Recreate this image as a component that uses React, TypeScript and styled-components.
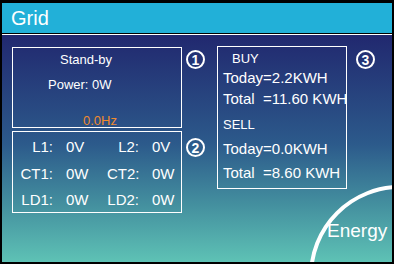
import styled, { createGlobalStyle } from "styled-components";

const GlobalStyle = createGlobalStyle`
  * {
    box-sizing: border-box;
  }
  body {
    margin: 0;
    background: #fff;
    font-family: "Liberation Sans", Arial, sans-serif;
  }
`;

const Screen = styled.div`
  position: relative;
  width: 394px;
  height: 264px;
  border: 2px solid #000;
  border-top-width: 3px;
  overflow: hidden;
  display: flex;
  flex-direction: column;
`;

const Header = styled.header`
  height: 31px;
  background: #22b0d8;
  border-bottom: 1px solid #000;
  color: #fff;
  font-size: 20px;
  line-height: 30px;
  padding-left: 9px;
`;

const Body = styled.main`
  flex: 1;
  border-top: 1px solid #fff;
  background: linear-gradient(180deg, #21286f 0%, #2c5a8b 48%, #44909f 75%, #5ec2b5 100%);
  padding: 12px 0 0 10px;
  display: grid;
  grid-template-columns: 170px 35px 130px auto;
  grid-template-rows: 81px 82px;
  row-gap: 3px;
  align-items: start;
  color: #fff;
`;

const Box = styled.section`
  border: 1px solid #fff;
  height: 100%;
`;

const StatusBox = styled(Box)`
  display: flex;
  flex-direction: column;
  padding-top: 4px;
  font-size: 13px;
  line-height: 15px;
`;

const StatusLine = styled.div<{ $indent: number; $gap?: number; $warn?: boolean }>`
  padding-left: ${({ $indent }) => $indent}px;
  margin-top: ${({ $gap = 0 }) => $gap}px;
  color: ${({ $warn }) => ($warn ? "#ef8a2e" : "#fff")};
`;

const PhaseBox = styled(Box)`
  display: grid;
  grid-template-columns: 40px 28px 32px auto;
  grid-auto-rows: 26.7px;
  column-gap: 13px;
  align-items: center;
  padding-top: 1px;
  font-size: 15px;
`;

const Label = styled.span`
  text-align: right;
  white-space: nowrap;
`;

const Value = styled.span`
  white-space: nowrap;
`;

const EnergyBox = styled(Box)`
  grid-column: 3;
  grid-row: 1 / span 2;
  height: 143px;
  margin-top: -1px;
  padding-left: 5px;
`;

const EnergyLine = styled.div<{ $gap: number; $small?: boolean; $indent?: number }>`
  margin-top: ${({ $gap }) => $gap}px;
  padding-left: ${({ $indent = 0 }) => $indent}px;
  font-size: ${({ $small }) => ($small ? 13 : 15)}px;
  line-height: 18px;
  white-space: pre;
`;

const Marker = styled.span<{ $left: number; $top: number }>`
  width: 19px;
  height: 19px;
  margin-left: ${({ $left }) => $left}px;
  margin-top: ${({ $top }) => $top}px;
  border: 2px solid #fff;
  border-radius: 50%;
  display: flex;
  align-items: center;
  justify-content: center;
  font-size: 14px;
  font-weight: bold;
  line-height: 1;
`;

const EnergyButton = styled.div`
  position: absolute;
  left: 307px;
  top: 182px;
  width: 182px;
  height: 182px;
  border: 4px solid #fff;
  border-radius: 50%;
  padding: 31px 0 0 14px;
  color: #fff;
  font-size: 19px;
  line-height: 22px;
`;

const phases = [
  ["L1:", "0V", "L2:", "0V"],
  ["CT1:", "0W", "CT2:", "0W"],
  ["LD1:", "0W", "LD2:", "0W"],
];

export default function App() {
  return (
    <>
      <GlobalStyle />
      <Screen>
        <Header>Grid</Header>
        <Body>
          <StatusBox>
            <StatusLine $indent={47}>Stand-by</StatusLine>
            <StatusLine $indent={35} $gap={10}>Power: 0W</StatusLine>
            <StatusLine $indent={70} $gap={21} $warn>0.0Hz</StatusLine>
          </StatusBox>
          <Marker $left={4} $top={3}>1</Marker>
          <EnergyBox>
            <EnergyLine $gap={3} $small $indent={9}>BUY</EnergyLine>
            <EnergyLine $gap={1}>Today=2.2KWH</EnergyLine>
            <EnergyLine $gap={3}>{"Total  =11.60 KWH"}</EnergyLine>
            <EnergyLine $gap={8} $small>SELL</EnergyLine>
            <EnergyLine $gap={6}>Today=0.0KWH</EnergyLine>
            <EnergyLine $gap={6}>{"Total  =8.60 KWH"}</EnergyLine>
          </EnergyBox>
          <Marker $left={9} $top={3}>3</Marker>
          <PhaseBox>
            {phases.flat().map((t, i) =>
              i % 2 === 0 ? <Label key={i}>{t}</Label> : <Value key={i}>{t}</Value>
            )}
          </PhaseBox>
          <Marker $left={4} $top={7}>2</Marker>
        </Body>
        <EnergyButton>Energy</EnergyButton>
      </Screen>
    </>
  );
}
